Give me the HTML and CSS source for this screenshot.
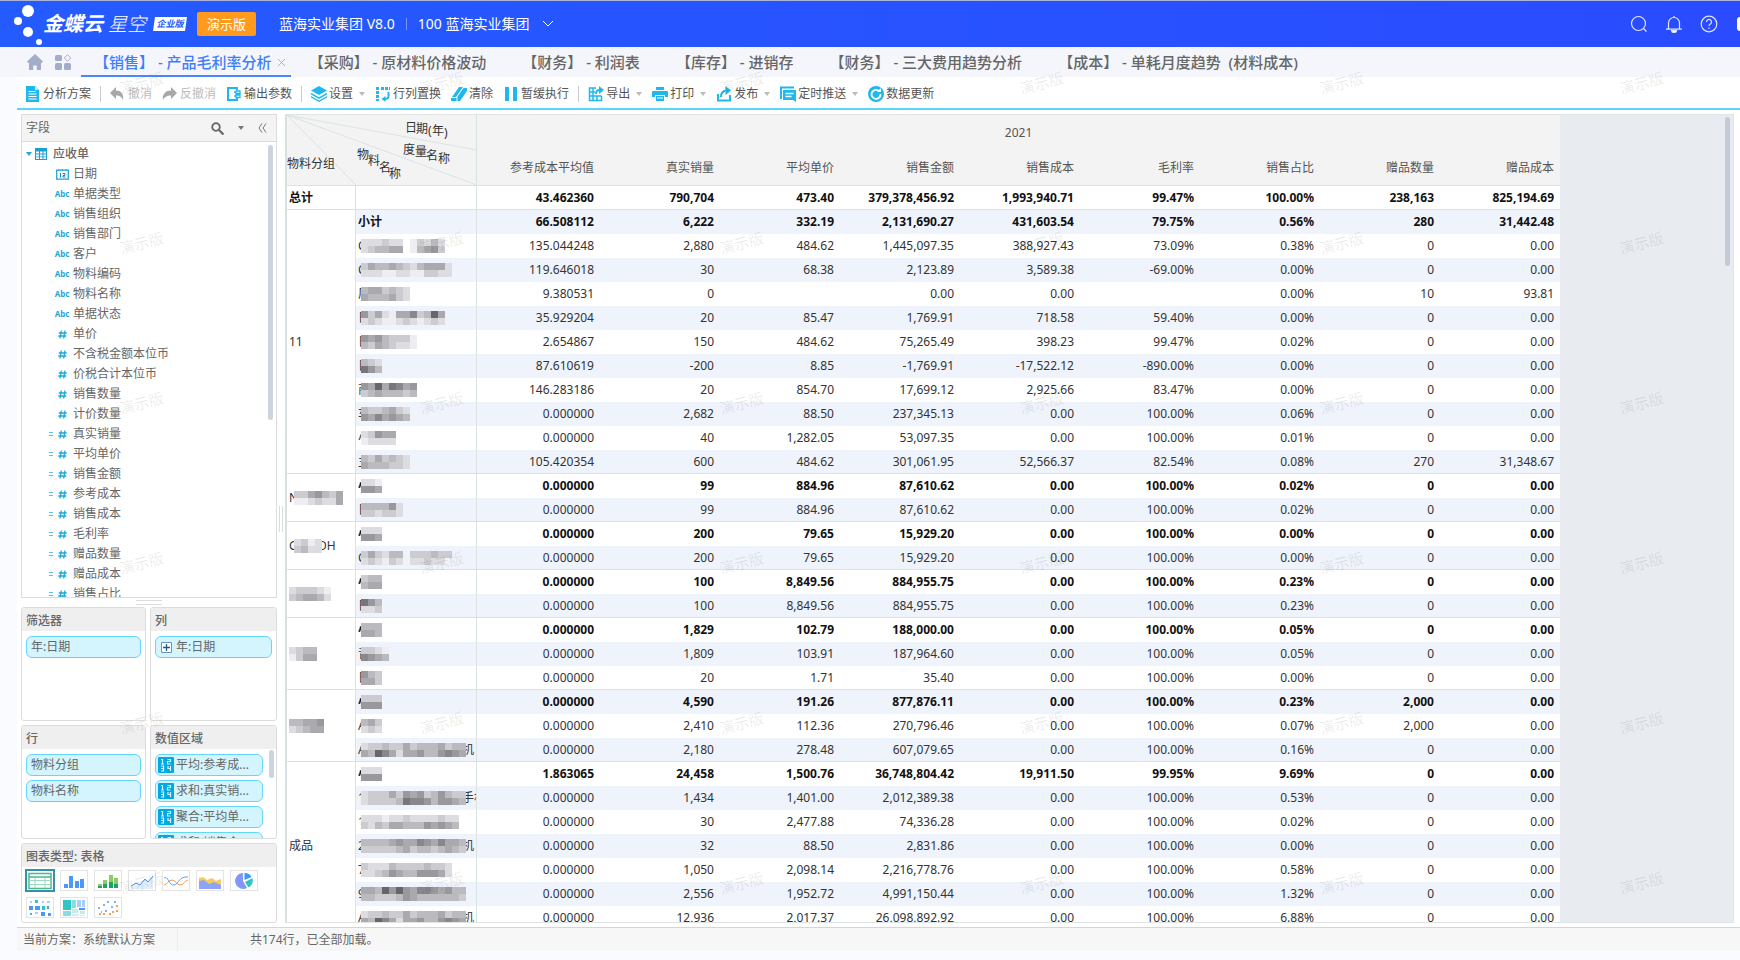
FILE: index.html
```html
<!DOCTYPE html>
<html lang="zh-CN">
<head>
  <meta charset="UTF-8">
  <meta name="viewport" content="width=device-width, initial-scale=1.0">
  <title>产品毛利率分析</title>
  <link rel="stylesheet" href="styles.css">
</head>
<body>

  <!-- 顶部栏 -->
  <header class="topbar">
    <svg class="logo" width="30" height="42" viewBox="0 0 30 42" fill="#fff">
      <circle cx="14" cy="8" r="6"/><circle cx="4" cy="18" r="4"/><circle cx="14" cy="29" r="5"/><circle cx="25" cy="39" r="3"/>
    </svg>
    <span class="brand">金蝶云</span>
    <span class="brand-sub">星空</span>
    <span class="edition">企业版</span>
    <span class="demo-tag">演示版</span>
    <span class="org">蓝海实业集团 V8.0</span>
    <span class="org-sep"></span>
    <button class="org org-switch">100 蓝海实业集团
      <svg width="12" height="8" viewBox="0 0 12 8" fill="none" stroke="#fff"><path d="M1 1l5 5 5-5"/></svg>
    </button>
    <nav class="top-actions">
      <button aria-label="搜索"><svg width="18" height="18" viewBox="0 0 18 18" fill="none" stroke="#dfe6ff" stroke-width="1.2"><circle cx="8.500" cy="8.500" r="7"/><path d="M13.500 13.500l3 3"/></svg></button>
      <button aria-label="消息"><svg width="18" height="18" viewBox="0 0 18 18" fill="none" stroke="#dfe6ff" stroke-width="1.200"><path d="M9 1v1.500M3.500 14V8a5.500 5.500 0 0 1 11 0v6M1 14.200h16"/><path d="M6.500 15.500h5a2.500 2 0 0 1-5 0z" fill="#fff"/></svg></button>
      <button aria-label="帮助"><svg width="18" height="18" viewBox="0 0 18 18" fill="none" stroke="#dfe6ff" stroke-width="1.200"><circle cx="9" cy="9" r="7.800"/><path d="M6.500 7a2.500 2.500 0 1 1 3.800 2.100c-.9.6-1.300 1-1.300 2M9 12.500v1.400"/></svg></button>
    </nav>
    <span class="avatar"></span>
  </header>

  <!-- 页签 -->
  <nav class="tabs">
    <a class="tab-icon" href="#" aria-label="首页"><svg width="16" height="16" viewBox="0 0 16 16" fill="#a3adc8"><path d="M8 0l8 7.500-1 1.200h-1V16H9.800v-4.500H6.200V16H2V8.700H1L0 7.500z"/></svg></a>
    <a class="tab-icon" href="#" aria-label="应用"><svg width="16" height="16" viewBox="0 0 16 16" fill="#a3adc8"><rect x="0" y="1" width="7" height="6" rx="1.500"/><rect x="0" y="9" width="7" height="7" rx="1.500"/><rect x="9" y="9" width="7" height="7" rx="1.500"/><path d="M12.500.7l3.300 3.300-3.300 3.300L9.200 4z" fill="none" stroke="#a3adc8"/></svg></a>
    <a class="tab active" href="#">【销售】 - 产品毛利率分析<svg width="9" height="9" viewBox="0 0 9 9" stroke="#a9b4cc"><path d="M1 1l7 7M8 1l-7 7"/></svg></a>
    <a class="tab" href="#">【采购】 - 原材料价格波动</a>
    <a class="tab" href="#">【财务】 - 利润表</a>
    <a class="tab" href="#">【库存】 - 进销存</a>
    <a class="tab" href="#">【财务】 - 三大费用趋势分析</a>
    <a class="tab" href="#">【成本】 - 单耗月度趋势&nbsp;&nbsp;(材料成本)</a>
  </nav>

  <div class="page">
    <!-- 工具栏 -->
    <div class="toolbar">
      <button><svg viewBox="0 0 16 16"><path d="M1 0h9l4 4v12H1z" fill="#1fb8ee"/><path d="M3.500 5.500h7M3.500 8h8M3.500 10.500h8M3.500 13h8" stroke="#fff"/><path d="M10 0v4h4" fill="#bdebfb"/></svg>分析方案</button>
      <span class="sep"></span>
      <button class="off"><svg viewBox="0 0 16 16"><path d="M6 1v3.500c5 0 8 3 7 10-1-3.500-3-5-7-5V13L0 7z" fill="#a8a8a8"/></svg>撤消</button>
      <button class="off"><svg viewBox="0 0 16 16"><path d="M9 1v3.500c-5 0-9 3-8 10 1-3.500 4-5 8-5V13l6-6z" fill="#a8a8a8"/></svg>反撤消</button>
      <button><svg viewBox="0 0 16 16" fill="none" stroke="#1fb8ee" stroke-width="2"><path d="M11 4V2H2v12h9v-2"/><path d="M10 5h4v2.500h-4zM10 9h4v2.500h-4zM8 6h2M8 10h2" stroke-width="1.300"/></svg>输出参数</button>
      <span class="sep"></span>
      <button><svg viewBox="0 0 16 16" fill="#1fb8ee"><path d="M8 0l8 4.500L8 9 0 4.500z"/><path d="M0 6.800l8 4.500 8-4.500v1.700L8 13 0 8.500z"/><path d="M0 10l8 4.500 8-4.500v1.500L8 16l-8-4.500z"/></svg>设置<i class="caret"></i></button>
      <button><svg viewBox="0 0 16 16" fill="none" stroke="#1fb8ee"><path d="M2.500 1v14" stroke-width="3" stroke-dasharray="3 1"/><path d="M6 2.500h9" stroke-width="3" stroke-dasharray="3 1"/><path d="M13.500 6v4c0 2-1 3-4 3" stroke-width="2"/><path d="M10.500 10v6L6.500 13z" fill="#1fb8ee" stroke="none"/></svg>行列置换</button>
      <button><svg viewBox="0 0 16 16" fill="#1fb8ee"><path d="M8 1h4L5 11H1zM12.500 2H16v3L9 15H6.500V10.500z"/><path d="M0 12h5.500v3H0z"/></svg>清除</button>
      <button><svg viewBox="0 0 16 16" fill="#1fb8ee"><path d="M2 1h4v14H2zM10 1h4v14h-4z"/></svg>暂缓执行</button>
      <span class="sep"></span>
      <button><svg viewBox="0 0 16 16" fill="none" stroke="#1fb8ee" stroke-width="1.500"><path d="M8 2H1.500v12.500h12V10M1.500 6H7M1.500 10h12M5 2v12.500M9 10v4.500"/><path d="M8 8c0-3 2-4 4-4" stroke-width="2"/><path d="M11 0l5 4-5 4z" fill="#1fb8ee" stroke="none"/></svg>导出<i class="caret"></i></button>
      <button><svg viewBox="0 0 16 16" fill="#1fb8ee"><path d="M4 1h8v3H4zM1 5h14a1 1 0 0 1 1 1v5h-3V9H3v2H0V6a1 1 0 0 1 1-1zM4 10h8v5H4z"/><path d="M5 12h6" stroke="#fff"/></svg>打印<i class="caret"></i></button>
      <button><svg viewBox="0 0 16 16" fill="none" stroke="#1fb8ee" stroke-width="2"><path d="M2 8v6.500h12V9"/><path d="M5 11c0-4 2-6.500 6-6.500"/><path d="M9.500 0L15 4.500 9.500 9z" fill="#1fb8ee" stroke="none"/></svg>发布<i class="caret"></i></button>
      <button><svg viewBox="0 0 16 16"><path d="M1 13V1.500h13" fill="none" stroke="#1fb8ee" stroke-width="2"/><path d="M3 4h13v12l-3-2H3z" fill="#1fb8ee"/><path d="M5.500 7.500h8M5.500 10.500h6" stroke="#fff" stroke-width="1.300"/></svg>定时推送<i class="caret"></i></button>
      <button><svg viewBox="0 0 16 16"><circle cx="8" cy="8" r="8" fill="#1fb8ee"/><path d="M11.500 5.500A4.500 4.500 0 1 0 12.500 8" fill="none" stroke="#fff" stroke-width="1.800"/><path d="M9 6h4V2z" fill="#fff"/></svg>数据更新</button>
    </div>

    <main class="main">
      <aside class="side">
        <!-- 字段树 -->
        <section class="box fields">
          <div class="fields-head">
            <span>字段</span>
            <button aria-label="查找"><svg width="13" height="13" viewBox="0 0 13 13" fill="none" stroke="#666" stroke-width="1.800"><circle cx="5" cy="5" r="3.800"/><path d="M8 8l4.500 4.500" stroke-width="2.200"/></svg></button>
            <button aria-label="更多"><i class="caret dark"></i></button>
            <button aria-label="收起"><svg width="9" height="10" viewBox="0 0 9 10" fill="none" stroke="#777"><path d="M4 .5L1 5l3 4.500M8 .5L5 5l3 4.500"/></svg></button>
          </div>
          <ul class="tree" id="tree">
            <li class="root"><i class="caret blue"></i><svg width="12" height="12" viewBox="0 0 12 12"><path d="M0 0h12v12H0z" fill="#1b9fd0"/><path d="M1 3.500h3v2H1zM5 3.500h2.500v2H5zM8.500 3.500H11v2H8.500zM1 6.500h3v2H1zM5 6.500h2.500v2H5zM8.500 6.500H11v2H8.500zM1 9.300h3V11H1zM5 9.300h2.500V11H5zM8.500 9.300H11V11H8.500z" fill="#fff"/></svg><span>应收单</span></li>
          </ul>
          <i class="thumb"></i>
        </section>
        <i class="grip"></i>

        <div class="zones">
          <section class="box zone">
            <h3>筛选器</h3>
            <div class="chips"><span class="chip">年:日期</span></div>
          </section>
          <section class="box zone">
            <h3>列</h3>
            <div class="chips"><span class="chip plus"><svg width="11" height="11" viewBox="0 0 11 11" fill="#fff" stroke="#6b93b5"><path d="M.5.500h10v10H.5z"/><path d="M5.500 2v7M2 5.500h7" stroke="#23578c" stroke-width="1.300"/></svg>年:日期</span></div>
          </section>
          <section class="box zone">
            <h3>行</h3>
            <div class="chips"><span class="chip">物料分组</span><span class="chip">物料名称</span></div>
          </section>
          <section class="box zone values">
            <h3>数值区域</h3>
            <div class="chips" id="values"></div>
            <i class="thumb"></i>
          </section>
        </div>

        <section class="box charts">
          <h3>图表类型: 表格</h3>
          <div class="chart-list">
            <button class="on" aria-label="表格"><svg viewBox="0 0 24 18" fill="none" stroke="#4fb58d"><path d="M1 1.500h22v15H1zM1 5h22" stroke-width="1.500"/><path d="M1 8.500h22M1 12.500h22M7 6v10M17 6v10" stroke="#9bd8bf"/></svg></button>
            <button aria-label="柱形图"><svg viewBox="0 0 24 18" fill="#4a98fb"><path d="M2 12h4v4H2zM7 4h4v12H7zM13 9h4v7h-4zM18 7h4v9h-4z"/></svg></button>
            <button aria-label="堆积柱形图"><svg viewBox="0 0 24 18" fill="#8ecb63"><path d="M2 12h4v4H2zM7 8h4v8H7zM13 3h4v13h-4zM18 6h4v10h-4z"/><path d="M2 14h4v2H2zM7 12h4v4H7zM13 10h4v6h-4zM18 12h4v4h-4z" fill="#1da462"/></svg></button>
            <button aria-label="折线图"><svg viewBox="0 0 24 18"><path d="M1 14l5-3 4 2 5-6 3 3 5-6v13H1z" fill="#e2eefd"/><path d="M1 14l5-3 4 2 5-6 3 3 5-6" fill="none" stroke="#4a98dc"/></svg></button>
            <button aria-label="多系列折线图"><svg viewBox="0 0 24 18" fill="none"><path d="M0 13c3 0 4-5 8-5s4 5 8 5 5-5 8-5" stroke="#f39a56"/><path d="M0 6c4-3 5 8 10 7s5-9 14-8" stroke="#59a3f4"/></svg></button>
            <button aria-label="面积图"><svg viewBox="0 0 24 18"><path d="M1 6l4-1 4 3 5-2 4 3 5-2v10H1z" fill="#f8c95c"/><path d="M1 9l5-1 5 4 5-2 7 3v4H1z" fill="#8fa3f6"/></svg></button>
            <button aria-label="饼图"><svg viewBox="0 0 24 18"><path d="M11 9V1a8 8 0 1 0 4 15z" fill="#8296f8"/><path d="M12.500 8V1a7.500 7.500 0 0 1 7 4z" fill="#3f97f7"/><path d="M13 10l7.500-4a8 8 0 0 1-4 9.500z" fill="#2fc5c5"/></svg></button>
            <button aria-label="热力图"><svg viewBox="0 0 24 18"><path d="M2 2h2v2H2zM19 2h3v2h-3zM7 13h3v2H7zM14 2h2v2h-2z" fill="#a6cdfd"/><path d="M1 7h4v4H1zM7 7h5v4H7zM13 13h4v4h-4zM19 7h2v3h-2zM20 14h3v3h-3z" fill="#4a98fb"/><path d="M7 1h3v3H7zM14 7h3v4h-3zM2 14h2v2H2z" fill="#2fc5c5"/></svg></button>
            <button aria-label="矩形树图"><svg viewBox="0 0 24 18"><path d="M1 1h8v10H1z" fill="#2fc5c5"/><path d="M1 12h8v5H1zM10 1h4v8h-4z" fill="#86dede"/><path d="M15 1h4v7h-4zM20 1h3v7h-3z" fill="#a6cdfd"/><path d="M10 10h6v4h-6zM18 12h5v3h-5z" fill="#bfeeee"/><path d="M17 9h6v2h-6z" fill="#4a98fb"/><path d="M10 15h7v2h-7zM18 16h5v1h-5z" fill="#d7e9fe"/></svg></button>
            <button aria-label="散点图"><svg viewBox="0 0 24 18"><path d="M2 8h2v2H2zM7 5h2v2H7zM9 11h2v2H9zM11 2h2v2h-2zM15 7h2v2h-2zM18 2h2v2h-2zM5 12h1v2H5z" fill="#7db4fb"/><path d="M3 14h2v2H3zM7 14h2v2H7zM13 14h2v2h-2zM16 12h2v2h-2zM20 11h2v2h-2zM20 6h2v2h-2z" fill="#f5a05f"/></svg></button>
          </div>
        </section>
      </aside>

      <i class="grip-v"></i>

      <!-- 透视表 -->
      <section class="pivot">
        <table>
          <colgroup><col class="c-group"><col class="c-name"><col class="c-first"><col span="8" class="c-num"></colgroup>
          <thead>
            <tr>
              <th class="corner" colspan="2" rowspan="2">
                <svg width="190" height="70" viewBox="0 0 190 70" fill="#333">
                  <path d="M0 0L69 70M0 0L190 70M0 0L190 35" stroke="#d9e4e2" fill="none"/>
                  <text x="0" y="53">物料分组</text>
                  <text x="70 81 92 102" y="44 50 57 63">物料名称</text>
                  <text x="118 129 141 145 157" y="17 18 20 20 22">日期(年)</text>
                  <text x="116 128 139 151" y="39 41 45 48">度量名称</text>
                </svg>
              </th>
              <th class="year" colspan="9">2021</th>
            </tr>
            <tr class="measures"><th>参考成本平均值</th><th>真实销量</th><th>平均单价</th><th>销售金额</th><th>销售成本</th><th>毛利率</th><th>销售占比</th><th>赠品数量</th><th>赠品成本</th></tr>
          </thead>
          <tbody id="rows">
            <tr class="total"><td class="group">总计</td><td class="name"></td><td>43.462360</td><td>790,704</td><td>473.40</td><td>379,378,456.92</td><td>1,993,940.71</td><td>99.47%</td><td>100.00%</td><td>238,163</td><td>825,194.69</td></tr>
          </tbody>
        </table>
        <i class="thumb"></i>
      </section>
    </main>

    <footer class="status"><span class="plan">当前方案：系统默认方案</span><span>共174行，已全部加载。</span></footer>
  </div>

  <div class="watermarks" id="watermarks" aria-hidden="true"></div>

  <script>
    const fields = [
      ["date", "日期"], ["abc", "单据类型"], ["abc", "销售组织"], ["abc", "销售部门"], ["abc", "客户"],
      ["abc", "物料编码"], ["abc", "物料名称"], ["abc", "单据状态"], ["num", "单价"], ["num", "不含税金额本位币"],
      ["num", "价税合计本位币"], ["num", "销售数量"], ["num", "计价数量"], ["calc", "真实销量"], ["calc", "平均单价"],
      ["calc", "销售金额"], ["calc", "参考成本"], ["calc", "销售成本"], ["calc", "毛利率"], ["calc", "赠品数量"],
      ["calc", "赠品成本"], ["calc", "销售占比"],
    ];
    const hash = '<svg width="9" height="9" viewBox="0 0 9 9" fill="none" stroke="#1ea7d8" stroke-width="1.300"><path d="M3.300 .5L2 8.500M7 .5L5.700 8.500M.7 3h8M.3 6h8"/></svg>';
    const icons = {
      date: '<svg width="13" height="11" viewBox="0 0 13 11"><path d="M.7 1.200h11.600v9H.7z" fill="#fff" stroke="#1ea7d8" stroke-width="1.300"/><path d="M3 0v2M6.500 0v2M10 0v2" stroke="#1ea7d8"/><path d="M4.500 4v4.500M6.500 4.500h2.500v2H7V8h2.500" fill="none" stroke="#1b88b5"/></svg>',
      abc: "Abc",
      num: hash,
      calc: hash,
    };
    document.getElementById("tree").insertAdjacentHTML("beforeend", fields.map(([type, name]) =>
      `<li class="${type}"><b class="eq"></b><b class="type">${icons[type]}</b><span>${name}</span></li>`).join(""));

    const digits = '<svg width="16" height="16" viewBox="0 0 16 16"><rect width="16" height="16" rx="1" fill="#00a9e6"/><path d="M3 2.500h1.500V7M3 7h3M9.500 2.500h3v2h-3V7h3M3 9h2.500v5H3M3 11.500h2.500M10 9v2.500h3M12.500 9v5" fill="none" stroke="#d4f5fd" stroke-width="1.200"/></svg>';
    document.getElementById("values").innerHTML = ["平均:参考成...", "求和:真实销...", "聚合:平均单...", "求和:销售金..."]
      .map(text => `<span class="chip sum">${digits}${text}</span>`).join("");

    // 脱敏色块，每个字符是一格的灰度，两行用 / 分隔
    function mask(pattern) {
      const lines = pattern.split("/");
      const cells = lines.map((line, y) => [...line].map((c, x) => {
        if (c === ".") return "";
        const v = parseInt(c, 16) * 17;
        return `<rect x="${x * 7}" y="${y * 7}" width="7" height="7" fill="rgb(${v},${v},${v + 4})"/>`;
      }).join("")).join("");
      const w = lines[0].length * 7;
      return `<svg class="mask" width="${w}" height="14" viewBox="0 0 ${w} 14" shape-rendering="crispEdges">${cells}</svg>`;
    }

    // 分组: [首字, 色块, 尾字, 行数]
    const groups = {
      0: ["11", "", "", 11], 11: ["N", "cca9bca/eedcdda", "", 2], 13: ["G", "dced/cbdd", "DH", 2],
      15: ["", "dcccde/cbaabd", "", 2], 17: ["", "dcbb/ecaa", "", 3], 20: ["", "bbaa9/dcbaa", "", 3], 23: ["成品", "", "", 9],
    };

    // 行: [首字, 色块, 尾字, 数值...]
    const rows = [
      ["小计", "", "", "66.508112|6,222|332.19|2,131,690.27|431,603.54|79.75%|0.56%|280|31,442.48"],
      ["C", "dddcdd.ecdbd/dcbbaa.eba9c", "", "135.044248|2,880|484.62|1,445,097.35|388,927.43|73.09%|0.38%|0|0.00"],
      ["C", "cabbabcdbaaad/dddeeddeeccdd", "", "119.646018|30|68.38|2,123.89|3,589.38|-69.00%|0.00%|0|0.00"],
      ["厂", "baacbcd/abbbacd", "", "9.380531|0||0.00|0.00||0.00%|10|93.81"],
      ["日", "9cadeaa8cb6a/dcdeedcdedcd", "", "35.929204|20|85.47|1,769.91|718.58|59.40%|0.00%|0|0.00"],
      ["日", "9a9bccce/bcabcdde", "", "2.654867|150|484.62|75,265.49|398.23|99.47%|0.02%|0|0.00"],
      ["日", "bcd/79b", "", "87.610619|-200|8.85|-1,769.91|-17,522.12|-890.00%|0.00%|0|0.00"],
      ["商", "9a6a78a9/cbabbbcb", "", "146.283186|20|854.70|17,699.12|2,925.66|83.47%|0.00%|0|0.00"],
      ["车", "bccbacd/9a8a9ab", "", "0.000000|2,682|88.50|237,345.13|0.00|100.00%|0.06%|0|0.00"],
      ["小", "dc9aa/edddd", "", "0.000000|40|1,282.05|53,097.35|0.00|100.00%|0.01%|0|0.00"],
      ["主", "bcacbcd/abbbccd", "", "105.420354|600|484.62|301,061.95|52,566.37|82.54%|0.08%|270|31,348.67"],
      ["小", "dde/99a", "", "0.000000|99|884.96|87,610.62|0.00|100.00%|0.02%|0|0.00"],
      ["日", "bbbb9d/ccdccd", "", "0.000000|99|884.96|87,610.62|0.00|100.00%|0.02%|0|0.00"],
      ["小", "ddd/99a", "", "0.000000|200|79.65|15,929.20|0.00|100.00%|0.00%|0|0.00"],
      ["C", "cacdbb.cccbcc/dcdecd.ddcdd", "", "0.000000|200|79.65|15,929.20|0.00|100.00%|0.00%|0|0.00"],
      ["小", "cbb/baa", "", "0.000000|100|8,849.56|884,955.75|0.00|100.00%|0.23%|0|0.00"],
      ["日", "79b/ddc", "", "0.000000|100|8,849.56|884,955.75|0.00|100.00%|0.23%|0|0.00"],
      ["小", "bbb/aab", "", "0.000000|1,829|102.79|188,000.00|0.00|100.00%|0.05%|0|0.00"],
      ["音", "ccde/89ab", "", "0.000000|1,809|103.91|187,964.60|0.00|100.00%|0.05%|0|0.00"],
      ["日", "9bc/aac", "", "0.000000|20|1.71|35.40|0.00|100.00%|0.00%|0|0.00"],
      ["小", "ccc/999", "", "0.000000|4,590|191.26|877,876.11|0.00|100.00%|0.23%|2,000|0.00"],
      ["A", "bac/dcd", "", "0.000000|2,410|112.36|270,796.46|0.00|100.00%|0.07%|2,000|0.00"],
      ["A", "dccbccacbbbacbb/ab68adaa9bb989a", "机", "0.000000|2,180|278.48|607,079.65|0.00|100.00%|0.16%|0|0.00"],
      ["小", "ddd/999", "", "1.863065|24,458|1,500.76|36,748,804.42|19,911.50|99.95%|9.69%|0|0.00"],
      ["1", "dcccac9a9cb9bcc/dccccb7889b99ab", "手机", "0.000000|1,434|1,401.00|2,012,389.38|0.00|100.00%|0.53%|0|0.00"],
      ["1", "dddeddcddddcdd/cdbcaabbb9a9ab", "", "0.000000|30|2,477.88|74,336.28|0.00|100.00%|0.02%|0|0.00"],
      ["2", "bbbba9aa89a8aab/cccccbacbbcbabc", "机", "0.000000|32|88.50|2,831.86|0.00|100.00%|0.00%|0|0.00"],
      ["7", "cdddbccccbccd/ddcb9abb999ad", "", "0.000000|1,050|2,098.14|2,216,778.76|0.00|100.00%|0.58%|0|0.00"],
      ["9", "aab6969a889a9bb/bbcccb9abbbbbbc", ",", "0.000000|2,556|1,952.72|4,991,150.44|0.00|100.00%|1.32%|0|0.00"],
      ["A", "dccbccacbbbacbb/ab68adaa9bb989a", "机", "0.000000|12,936|2,017.37|26,098,892.92|0.00|100.00%|6.88%|0|0.00"],
    ];

    function label([head, pattern, tail]) {
      if (!pattern) return head;
      return `<div class="masked"><span class="head">${head}</span>${mask(pattern)}<span class="tail">${tail}</span></div>`;
    }

    const body = document.getElementById("rows");
    rows.forEach((row, i) => {
      const group = groups[i];
      const tr = document.createElement("tr");
      if (group) tr.classList.add("sub");
      if (groups[i + 1]) tr.classList.add("last");
      tr.innerHTML = (group ? `<td class="group" rowspan="${group[3]}">${label(group)}</td>` : "")
        + `<td class="name">${label(row)}</td>`
        + row[3].split("|").map(v => `<td>${v}</td>`).join("");
      body.appendChild(tr);
    });
    // 最后一组还有未滚动到的行
    body.insertAdjacentHTML("beforeend", "<tr></tr><tr></tr>");

    document.getElementById("watermarks").innerHTML = "<span>演示版</span>".repeat(36);
  </script>
</body>
</html>
```
FILE: styles.css
```css
* {
  box-sizing: border-box;
}
body {
  margin: 0;
  height: 100vh;
  display: flex;
  flex-direction: column;
  position: relative;
  overflow: hidden;
  background: #fafbff;
  color: #666;
  font-family: "Noto Sans", "Noto Sans CJK SC", sans-serif;
  font-size: 12px;
  line-height: 20px;
}
button {
  border: none;
  background: none;
  padding: 0;
  color: inherit;
  font: inherit;
  cursor: pointer;
}
a {
  color: inherit;
  text-decoration: none;
}
h3 {
  margin: 0;
  font-size: 12px;
  font-weight: 500;
}
svg {
  display: block;
  flex: none;
}

/* 顶部栏 */
.topbar {
  flex: none;
  display: flex;
  align-items: center;
  height: 47px;
  padding-left: 14px;
  border-top: 1px solid #a9b4d8;
  background: linear-gradient(90deg, #245bff, #2a4bff);
  color: #fff;
}
.brand {
  margin-left: -1px;
  font-size: 20px;
  font-weight: bold;
  font-style: italic;
}
.brand-sub {
  margin-left: 5px;
  font-size: 19px;
  font-weight: 300;
  font-style: italic;
}
.edition {
  position: relative;
  z-index: 0;
  margin-left: 8px;
  width: 32px;
  color: #245bff;
  font-size: 9px;
  font-weight: bold;
  font-style: italic;
  line-height: 14px;
  text-align: center;
}
.edition::before {
  content: "";
  position: absolute;
  inset: 0;
  z-index: -1;
  background: #fff;
  transform: skewX(-8deg);
}
.demo-tag {
  margin: 0 23px 0 11px;
  padding: 0 10px;
  border-radius: 2px;
  background: #ff9a1c;
  font-size: 13px;
  line-height: 24px;
}
.org {
  font-size: 14px;
}
.org-sep {
  width: 1px;
  height: 12px;
  margin: 0 11px;
  background: #7c98ff;
}
.org-switch {
  display: flex;
  align-items: center;
  gap: 12px;
}
.top-actions {
  display: flex;
  gap: 17px;
  margin-left: auto;
}
.avatar {
  flex: none;
  width: 3px;
  height: 14px;
  margin-left: 19px;
  border-radius: 8px 0 0 8px;
  background: #fff;
}

/* 页签 */
.tabs {
  flex: none;
  display: flex;
  align-items: center;
  height: 30px;
  padding-left: 27px;
  background: #f4f6fb;
  white-space: nowrap;
}
.tab-icon {
  margin-right: 12px;
}
.tab-icon + .tab {
  margin-left: -2px;
}
.tab {
  padding: 0 18px;
  font-size: 15px;
  font-weight: 500;
  line-height: 30px;
}
.tab.active {
  display: flex;
  align-items: center;
  gap: 5px;
  height: 30px;
  padding: 2px 5px 0 13px;
  border-bottom: 2px solid #4a86ff;
  color: #3f7dfc;
}

.page {
  flex: 1;
  min-height: 0;
  display: flex;
  flex-direction: column;
  margin: 0 0 9px 17px;
  background: #fff;
}

/* 工具栏 */
.toolbar {
  flex: none;
  display: flex;
  align-items: center;
  gap: 10px;
  height: 33px;
  padding: 2px 0 0 8px;
  border-bottom: 2px solid #5bd5fb;
  color: #555;
  white-space: nowrap;
}
.toolbar button {
  display: flex;
  align-items: center;
  gap: 2px;
}
.toolbar svg {
  width: 16px;
  height: 16px;
}
.toolbar .off {
  color: #bbb;
}
.toolbar .sep {
  width: 1px;
  height: 16px;
  margin: 0 -1px;
  background: #ccc;
}
.caret {
  display: block;
  flex: none;
  border: 3px solid transparent;
  border-top: 4px solid #bbb;
  border-bottom: 0;
}
.toolbar .caret {
  margin-left: 4px;
}
.caret.dark {
  border-top-color: #777;
}
.caret.blue {
  border-top-color: #1ea7d8;
}

/* 左侧面板 */
.main {
  flex: 1;
  min-height: 0;
  display: flex;
  padding: 4px 6px 4px 4px;
}
.side {
  flex: none;
  display: flex;
  flex-direction: column;
  width: 256px;
}
.box {
  border: 1px solid #dcdcdc;
  background: #fff;
  position: relative;
  overflow: hidden;
}
.fields {
  flex: 1;
  min-height: 0;
}
.fields-head {
  display: flex;
  align-items: center;
  gap: 14px;
  height: 27px;
  padding: 0 9px 0 4px;
  border-bottom: 1px solid #dcdcdc;
  background: #f4f4f4;
}
.fields-head span {
  flex: 1;
}
.tree {
  margin: 0;
  padding: 2px 0 0 4px;
  list-style: none;
}
.tree li {
  display: flex;
  align-items: center;
  height: 20px;
}
.tree .root {
  gap: 3px;
}
.root span {
  margin-left: 3px;
  font-weight: 500;
}
.eq {
  width: 4px;
  height: 4px;
  margin: 0 2px 0 23px;
}
.calc .eq {
  border: solid #5cc0e2;
  border-width: 1px 0;
}
.type {
  display: flex;
  justify-content: center;
  width: 14px;
  margin-right: 4px;
  color: #1ea7d8;
  font-size: 8px;
}
.thumb {
  position: absolute;
  right: 3px;
  width: 5px;
  border-radius: 3px;
  background: #cdd4de;
}
.fields .thumb {
  top: 30px;
  height: 275px;
}
.grip {
  align-self: center;
  width: 26px;
  height: 5px;
  margin: 2px 0;
  border: solid #dcdcdc;
  border-width: 1px 0;
}
.grip-v {
  align-self: center;
  width: 4px;
  height: 26px;
  margin: 0 2px;
  border: solid #dcdcdc;
  border-width: 0 1px;
}
.zones {
  display: grid;
  grid-template-columns: 125px 1fr;
  grid-auto-rows: 114px;
  gap: 4px;
}
.zone,
.charts {
  border-radius: 3px;
}
.box h3 {
  padding: 2px 4px 0;
  background: #efefef;
  line-height: 21px;
}
.chips {
  display: flex;
  flex-direction: column;
  gap: 4px;
  padding: 5px 4px 0;
}
.values .chips {
  padding-right: 13px;
}
.chip {
  display: flex;
  align-items: center;
  flex: none;
  gap: 4px;
  height: 22px;
  padding: 0 4px;
  border: 1px solid #64d5fb;
  border-radius: 6px;
  background: #d4f5fd;
  white-space: nowrap;
}
.chip.plus {
  padding-left: 5px;
}
.chip.sum {
  gap: 2px;
  padding-left: 2px;
}
.values .thumb {
  top: 24px;
  right: 2px;
  height: 28px;
}
.charts {
  flex: none;
  height: 80px;
  margin-top: 4px;
}
.chart-list {
  display: flex;
  flex-wrap: wrap;
  gap: 6px;
  padding: 3px 4px;
}
.chart-list button {
  width: 28px;
  height: 21px;
  border: 1px solid #e4e4e4;
}
.chart-list svg {
  width: 24px;
  height: 18px;
  margin: 0 auto;
}
.chart-list .on {
  outline: 1px solid #3391a8;
  border-color: #3391a8;
}

/* 透视表 */
.pivot {
  flex: 1;
  min-width: 0;
  position: relative;
  overflow: hidden;
  border: 1px solid #dfe5e5;
  border-left: 2px solid #d8e0e0;
  background: #e8ebf0;
}
.pivot .thumb {
  top: 2px;
  height: 149px;
  background: #c3cbd7;
}
.pivot table {
  width: 1273px;
  table-layout: fixed;
  border-spacing: 0;
  background: #fff;
  color: #333;
}
.c-group {
  width: 69px;
}
.c-name {
  width: 121px;
}
.c-first {
  width: 123px;
}
.c-num {
  width: 120px;
}
.pivot th {
  height: 35px;
  padding: 0 6px;
  background: #f3f3f3;
  color: #555;
  font-weight: normal;
}
.pivot .year {
  height: 36px;
  text-align: center;
}
.pivot .corner {
  padding: 0;
  border: solid #d9e4e2;
  border-width: 0 1px 1px 0;
}
.measures th {
  border-bottom: 1px solid #d9e4e2;
  text-align: right;
}
.pivot td {
  height: 24px;
  padding: 0 6px;
  text-align: right;
  white-space: nowrap;
}
.pivot tr:nth-child(even) td:not(.group) {
  background: #eff3fb;
}
.pivot td.group,
.pivot td.name {
  padding: 0 0 0 2px;
  border-right: 1px solid #d9e4e2;
  text-align: left;
  overflow: hidden;
}
.pivot td.group {
  border-bottom: 1px solid #d9e4e2;
}
.total td,
.last td {
  border-bottom: 1px solid #d9e4e2;
}
.total,
.sub td:not(.group) {
  color: #111;
  font-weight: bold;
}
.masked {
  display: flex;
  align-items: center;
  height: 20px;
}
.masked .head {
  flex: none;
  width: 3px;
  overflow: hidden;
}
.group .head {
  width: auto;
  max-width: 5px;
}
.mask {
  position: relative;
}
.tail {
  margin-left: -4px;
}

/* 状态栏 */
.status {
  flex: none;
  display: flex;
  height: 24px;
  padding-left: 6px;
  border-top: 1px solid #d5d5d5;
  background: #f7f7f7;
  line-height: 23px;
}
.plan {
  width: 155px;
  margin-right: 72px;
  border-right: 1px solid #eee;
}

/* 水印 */
.watermarks {
  position: absolute;
  inset: 0;
  display: grid;
  grid-template-columns: repeat(6, 300px);
  grid-auto-rows: 160px;
  padding: 73px 0 0 119px;
  overflow: hidden;
  pointer-events: none;
}
.watermarks span {
  justify-self: start;
  align-self: start;
  color: rgba(0, 0, 0, 0.09);
  font-size: 15px;
  transform: rotate(-15deg);
}
```
